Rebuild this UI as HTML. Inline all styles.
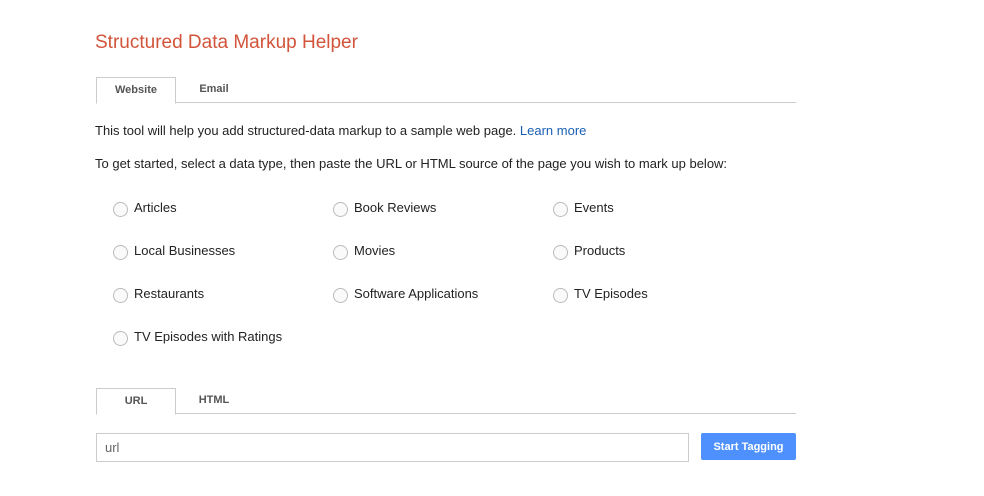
<!DOCTYPE html>
<html><head><style>
body{margin:0;background:#fff;font-family:"Liberation Sans",Arial,sans-serif;color:#222;width:984px;height:496px;position:relative;overflow:hidden}
.a{position:absolute}
h1{position:absolute;left:95px;top:32px;margin:0;font-size:19px;font-weight:normal;color:#d2543a}
.tabs{position:absolute;left:96px;width:700px;height:25px;border-bottom:1px solid #ccc}
.tab{position:absolute;top:0;height:25px;width:78px;text-align:center;font-size:11px;font-weight:bold;color:#555;line-height:25px}
.tab.on{border:1px solid #ccc;border-bottom:1px solid #fff;background:#fff;height:25px;top:0;left:0}
p{position:absolute;left:95px;margin:0;font-size:13px}
.r{position:absolute;font-size:13px;padding-left:21px;line-height:16px}
.r:before{content:"";position:absolute;left:0;top:2px;width:13px;height:13px;border:1px solid #bbb;border-radius:50%;background:#fafafa}
</style></head><body>
<h1>Structured Data Markup Helper</h1>
<div class="tabs" style="top:77px"><div class="tab on">Website</div><div class="tab" style="left:79px">Email</div></div>
<p style="top:123px">This tool will help you add structured-data markup to a sample web page. <span style="color:#1a5fb4">Learn more</span></p>
<p style="top:156px">To get started, select a data type, then paste the URL or HTML source of the page you wish to mark up below:</p>
<div class="r" style="left:113px;top:200px">Articles</div>
<div class="r" style="left:333px;top:200px">Book Reviews</div>
<div class="r" style="left:553px;top:200px">Events</div>
<div class="r" style="left:113px;top:243px">Local Businesses</div>
<div class="r" style="left:333px;top:243px">Movies</div>
<div class="r" style="left:553px;top:243px">Products</div>
<div class="r" style="left:113px;top:286px">Restaurants</div>
<div class="r" style="left:333px;top:286px">Software Applications</div>
<div class="r" style="left:553px;top:286px">TV Episodes</div>
<div class="r" style="left:113px;top:329px">TV Episodes with Ratings</div>
<div class="tabs" style="top:388px"><div class="tab on">URL</div><div class="tab" style="left:79px">HTML</div></div>
<div class="a" style="left:96px;top:433px;width:591px;height:27px;border:1px solid #ccc;font-size:13px;color:#666;line-height:27px;text-indent:8px">url</div>
<div class="a" style="left:701px;top:433px;width:95px;height:27px;background:#4d90fe;border-radius:2px;color:#fff;font-size:11px;font-weight:bold;text-align:center;line-height:28px">Start Tagging</div>
</body></html>
